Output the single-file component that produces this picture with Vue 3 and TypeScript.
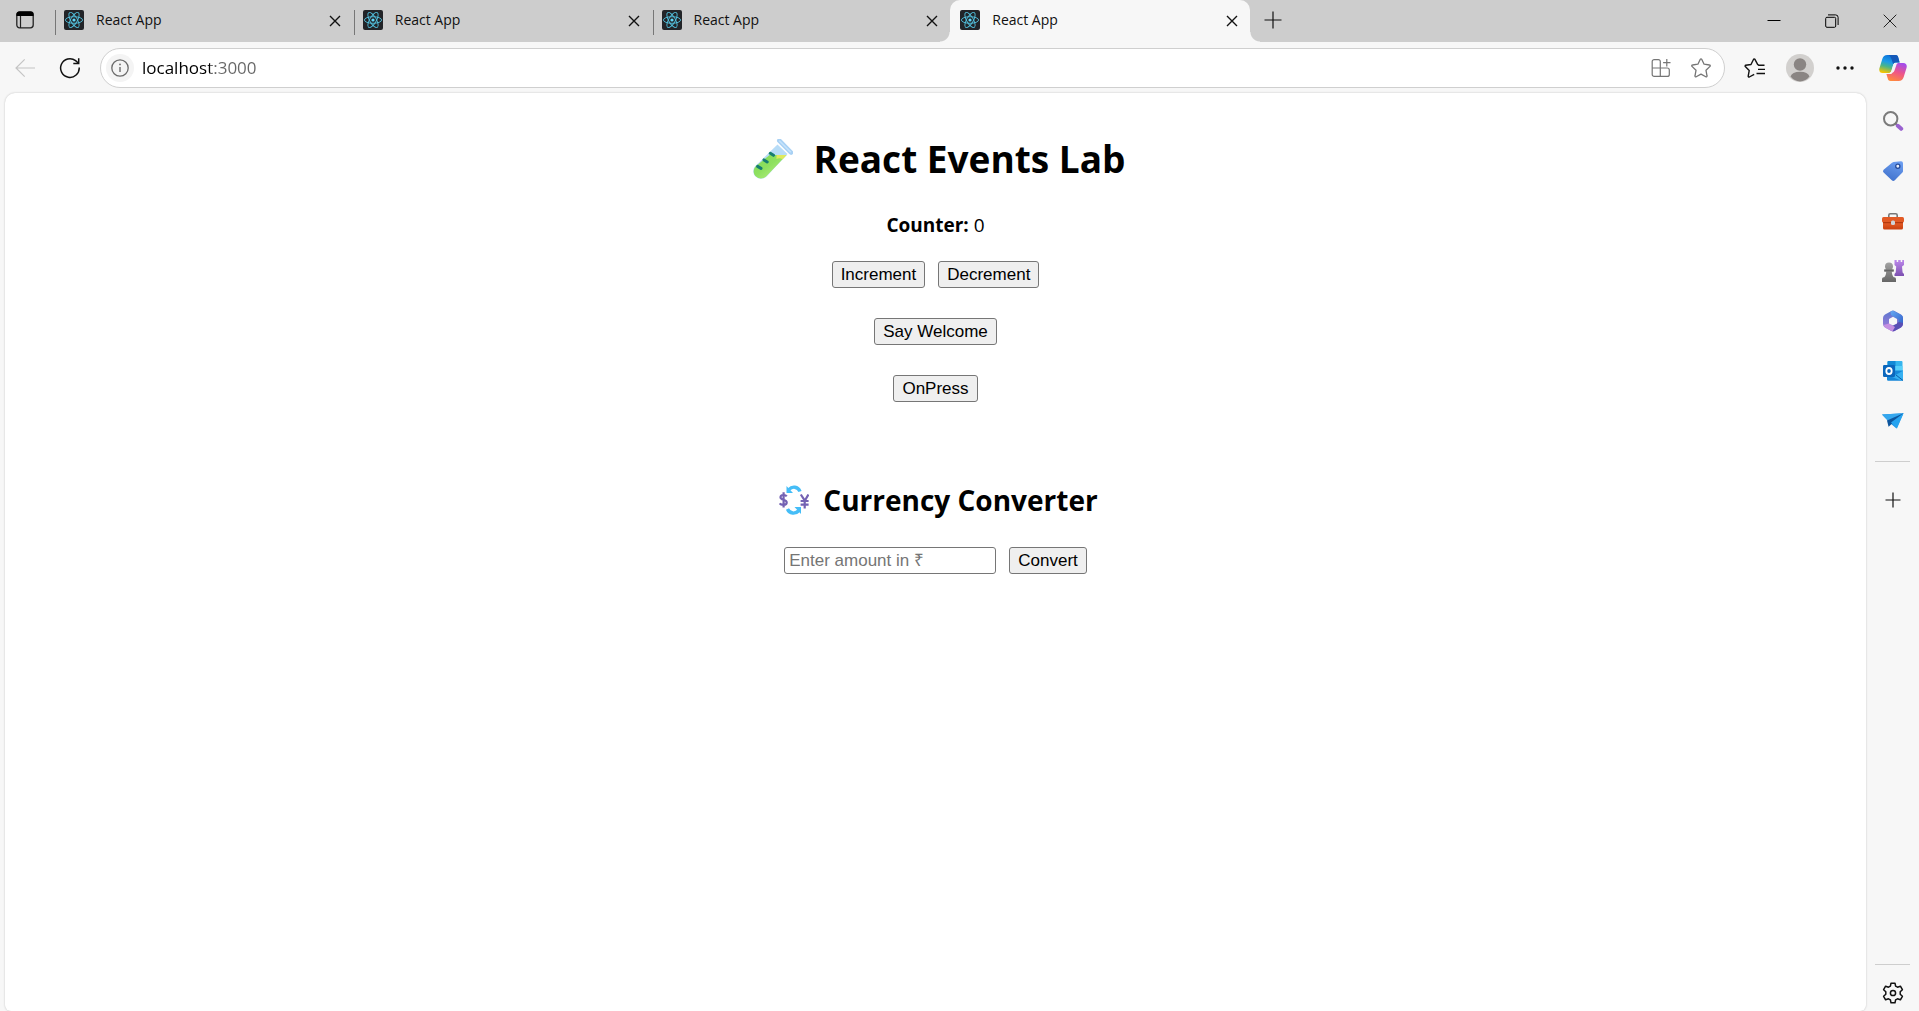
<script setup lang="ts">
import { ref } from 'vue'

interface Tab {
  id: number
  title: string
}

const tabs = ref<Tab[]>([
  { id: 1, title: 'React App' },
  { id: 2, title: 'React App' },
  { id: 3, title: 'React App' },
  { id: 4, title: 'React App' },
])
const activeTab = ref(4)
const address = ref('localhost:3000')

const counter = ref(0)
const amount = ref('')
const message = ref('')

const increment = () => { counter.value += 1 }
const decrement = () => { counter.value -= 1 }
const say = (text: string) => { message.value = text }
const convert = () => {
  const rupees = Number(amount.value)
  message.value = rupees ? `€${(rupees / 90).toFixed(2)}` : ''
}
</script>

<template>
  <div class="browser">
    <header class="tab-strip">
      <button class="icon-btn tab-actions" type="button" aria-label="Tab actions menu">
        <svg width="20" height="20" viewBox="0 0 20 20" fill="none">
          <rect x="1.8" y="1.8" width="16.4" height="16" rx="2.8" stroke="#222" stroke-width="1.3" />
          <path d="M1.5 6V4.5a3 3 0 0 1 3-3h11a3 3 0 0 1 3 3V6z" fill="#000" />
          <path d="M5.5 6v12" stroke="#222" stroke-width="1.2" />
        </svg>
      </button>
      <nav class="tabs" aria-label="Tabs">
        <div v-for="tab in tabs" :key="tab.id" class="tab" :class="{ active: tab.id === activeTab }">
          <button class="tab-main" type="button" @click="activeTab = tab.id">
            <svg width="20" height="20" viewBox="0 0 20 20" fill="none">
              <rect width="20" height="20" rx="2" fill="#222428" />
              <g stroke="#53c1de" stroke-width="0.9">
                <ellipse cx="10" cy="10" rx="8.6" ry="3.3" />
                <ellipse cx="10" cy="10" rx="8.6" ry="3.3" transform="rotate(60 10 10)" />
                <ellipse cx="10" cy="10" rx="8.6" ry="3.3" transform="rotate(120 10 10)" />
              </g>
              <circle cx="10" cy="10" r="1.6" fill="#61dafb" />
            </svg>
            <span>{{ tab.title }}</span>
          </button>
          <button class="icon-btn tab-close" type="button" aria-label="Close tab">
            <svg width="12" height="12" viewBox="0 0 12 12"><path d="M1 1l10 10M11 1L1 11" stroke="#111" stroke-width="1.4" /></svg>
          </button>
        </div>
      </nav>
      <button class="icon-btn new-tab" type="button" aria-label="New tab">
        <svg width="18" height="18" viewBox="0 0 18 18"><path d="M9 0.5v17M0.5 9h17" stroke="#111" stroke-width="1.2" /></svg>
      </button>
      <div class="window-controls">
        <button class="icon-btn" type="button" aria-label="Minimize">
          <svg width="14" height="14" viewBox="0 0 14 14"><path d="M0.5 6.5h13" stroke="#000" /></svg>
        </button>
        <button class="icon-btn" type="button" aria-label="Restore">
          <svg width="14" height="14" viewBox="0 0 14 14" fill="none" stroke="#000">
            <rect x="0.7" y="3.3" width="10" height="10" rx="1.2" />
            <path d="M3 0.9h7.6a2.5 2.5 0 0 1 2.5 2.5V11" />
          </svg>
        </button>
        <button class="icon-btn" type="button" aria-label="Close">
          <svg width="14" height="14" viewBox="0 0 14 14"><path d="M0.7 0.7l12.6 12.6M13.3 0.7L0.7 13.3" stroke="#222" /></svg>
        </button>
      </div>
    </header>

    <div class="toolbar">
      <button class="icon-btn tool" type="button" aria-label="Back" disabled>
        <svg width="20" height="20" viewBox="0 0 20 20" fill="none" stroke="#c4c4c4" stroke-width="1.2">
          <path d="M20 10H1M9.7 1.3L1 10l8.7 8.7" />
        </svg>
      </button>
      <button class="icon-btn tool" type="button" aria-label="Refresh">
        <svg width="22" height="22" viewBox="0 0 22 22" fill="none" stroke="#111" stroke-width="1.5">
          <path d="M20.2 10.5a9.3 9.3 0 1 1-3.6-6.8l2.6 2.3" /><path d="M19.7 1.2v5.4h-5.4" />
        </svg>
      </button>
      <div class="address-bar">
        <button class="icon-btn site-info" type="button" aria-label="View site information">
          <svg width="18" height="18" viewBox="0 0 18 18" fill="none">
            <circle cx="9" cy="9" r="8.2" stroke="#6b6b6b" stroke-width="1.3" />
            <path d="M9 8v5" stroke="#6b6b6b" stroke-width="1.4" /><circle cx="9" cy="5.4" r="0.9" fill="#6b6b6b" />
          </svg>
        </button>
        <input v-model="address" class="address" type="text" aria-label="Address and search bar" spellcheck="false" />
        <button class="icon-btn address-action" type="button" aria-label="App available">
          <svg width="20" height="20" viewBox="0 0 20 20" fill="none" stroke="#757575" stroke-width="1.2">
            <path d="M9.3 18.4H3.2A2 2 0 0 1 1.2 16.4V3.6A2 2 0 0 1 3.2 1.6h4.2a1.9 1.9 0 0 1 1.9 1.9v14.9M1.2 10h15.1a2 2 0 0 1 2 2v4.4a2 2 0 0 1-2 2h-7" />
            <path d="M15.8 1v7.4M12.1 4.7h7.4" />
          </svg>
        </button>
        <button class="icon-btn address-action" type="button" aria-label="Add this page to favorites">
          <svg width="22" height="22" viewBox="0 0 22 22" fill="none" stroke="#757575" stroke-width="1.3" stroke-linejoin="round">
            <path d="M10.3 2.2a.8.8 0 0 1 1.4 0l2.4 5 5.4.8a.8.8 0 0 1 .5 1.4l-4 3.9 1 5.5a.8.8 0 0 1-1.2.9L11 17.1l-4.8 2.6a.8.8 0 0 1-1.2-.9l1-5.5-4-3.9A.8.8 0 0 1 2.5 8l5.4-.8z" />
          </svg>
        </button>
      </div>
      <button class="icon-btn tool" type="button" aria-label="Favorites">
        <svg width="22" height="22" viewBox="0 0 22 22" fill="none" stroke="#111" stroke-width="1.4" stroke-linejoin="round">
          <path d="M20.5 8.3h-5.6l-1.3-.9-2.8-5.2a.7.7 0 0 0-1.2 0L7 7.5l-5.3.8a.8.8 0 0 0-.4 1.3l3.9 4-1 5.5a.8.8 0 0 0 1.1.9l4.9-2.7" />
          <path d="M14 12.4h7M12.5 16.5h8.5" />
        </svg>
      </button>
      <button class="icon-btn tool" type="button" aria-label="Profile">
        <svg width="28" height="28" viewBox="0 0 28 28">
          <circle cx="14" cy="14" r="14" fill="#d2d0ce" /><circle cx="14" cy="10.5" r="6.2" fill="#8a8583" />
          <path d="M4.5 22.5Q6 17.8 14 17.8t9.5 4.7A13 13 0 0 1 14 27.4a13 13 0 0 1-9.5-4.9z" fill="#8a8583" />
        </svg>
      </button>
      <button class="icon-btn tool" type="button" aria-label="Settings and more">
        <svg width="18" height="4" viewBox="0 0 18 4" fill="#111"><circle cx="2" cy="2" r="1.7" /><circle cx="9" cy="2" r="1.7" /><circle cx="16" cy="2" r="1.7" /></svg>
      </button>
      <button class="icon-btn copilot" type="button" aria-label="Copilot">
        <svg width="28" height="26" viewBox="0 0 28 26">
          <defs>
            <linearGradient id="cpBlue" x1="0.6" y1="0" x2="0.3" y2="1"><stop offset="0" stop-color="#0b6fd8" /><stop offset="0.4" stop-color="#1c9ce8" /><stop offset="0.65" stop-color="#48b58a" /><stop offset="1" stop-color="#f5c400" /></linearGradient>
            <linearGradient id="cpPink" x1="0.7" y1="0" x2="0.3" y2="1"><stop offset="0" stop-color="#a44cec" /><stop offset="0.5" stop-color="#ee5589" /><stop offset="1" stop-color="#ff8a3c" /></linearGradient>
          </defs>
          <path d="M18 8h6.3c2.9 0 4 2.3 3.2 5l-2.8 9c-.8 2.6-2.4 4-5 4h-8c-2 0-2.7-1.3-3.1-3l-1.2-4H11c1.7 0 2.3-.8 2.8-2.3l1.7-5.8C16 9 16.6 8 18 8z" fill="url(#cpPink)" />
          <path d="M10 18H3.7C.8 18-.3 15.7.5 13l2.8-9c.8-2.6 2.4-4 5-4h8c2 0 2.700 1.300 3.100 3l1.200 4.500H17c-1.700 0-2.300.8-2.800 2.300l-1.700 5.700C12 17 11.400 18 10 18z" fill="url(#cpBlue)" />
          <path d="M9.500 0h7c1.800 0 2.500 1.300 2.900 3l1.200 4.500H17c-1.500 0-2.200.5-2.700 1.800C13 6 12.300 1.500 9.500 0z" fill="#1559b8" />
          <path d="M18 8h-1c-1.700 0-2.400.8-2.800 2.300l-1.700 5.400c-.5 1.600-1.200 2.300-2.500 2.300h1.200c1.500 0 3.500-.2 4.200-2.200l1.900-5.500C17.600 9 18 8.500 19 8z" fill="#f3f3f6" />
        </svg>
      </button>
    </div>

    <div class="workspace">
      <main class="page">
        <h1>
          <svg width="40" height="40" viewBox="0 0 40 40" aria-hidden="true">
            <defs>
              <linearGradient id="liquid" x1="0" y1="0" x2="1" y2="1"><stop offset="0" stop-color="#82d957" /><stop offset="0.45" stop-color="#8de05f" /><stop offset="1" stop-color="#c4f58a" /></linearGradient>
            </defs>
            <path d="M24.500 5.500L34.500 15 14 37C11 40.200 6 40.800 2.800 37.800-.6 34.600-.4 30 2.600 26.800z" fill="#b7dcf7" />
            <path d="M16.600 16H33.600L13.600 37C10.800 40 6 40.500 3 37.600 0 34.700 0 30.300 2.800 27.200z" fill="url(#liquid)" />
            <path d="M23.500 16h10l-4 4.200q-3-1.800-6-.2z" fill="#e0e95d" />
            <path d="M26.300 1.700L38 13.500" stroke="#a9d1f4" stroke-width="4.600" stroke-linecap="round" />
            <path d="M26.800 2.200l10.500 10.600" stroke="#c5e3fb" stroke-width="1.600" stroke-linecap="round" />
            <path d="M17.300 14.300l3.200 2M11 20.900l3.200 2M4.600 27.400l3.400 2" stroke="#167d70" stroke-width="3" stroke-linecap="round" />
          </svg>
          <span>React Events Lab</span>
        </h1>
        <p class="counter"><strong>Counter:</strong> {{ counter }}</p>
        <div class="row">
          <button class="native" type="button" @click="increment">Increment</button>
          <button class="native" type="button" @click="decrement">Decrement</button>
        </div>
        <div class="row">
          <button class="native" type="button" @click="say('Welcome')">Say Welcome</button>
        </div>
        <div class="row">
          <button class="native" type="button" @click="say('I was clicked')">OnPress</button>
        </div>
        <h2>
          <svg width="30" height="30" viewBox="0 0 30 30" fill="none" aria-hidden="true">
            <g stroke="#45bdf7" stroke-width="3.400"><path d="M21 6.500C19 1.200 13 1 10 4.500" /><path d="M8.500 24C10.500 29 16.500 29.300 20 25.500" /></g>
            <path d="M7.500 1v7h6.500zM22 29v-7h-6.500z" fill="#45bdf7" />
            <g stroke="#7462b3" stroke-width="2.200">
              <path d="M7.700 11.300C6.500 9.500 1.500 9.300 1.500 12.300 1.500 15.600 7.700 14 7.700 17.500 7.700 20.600 2 20.500.8 18.400M4.600 7.200v15.200" />
              <path d="M21.800 9.500l4 6.200 3.600-6.200M25.700 15v8.500M21.600 16h8M21.600 19.600h8" />
            </g>
          </svg>
          <span>Currency Converter</span>
        </h2>
        <form class="row" @submit.prevent="convert">
          <input v-model="amount" class="amount" type="text" placeholder="Enter amount in ₹" aria-label="Amount in rupees" />
          <button class="native" type="submit">Convert</button>
        </form>
        <p v-if="message" class="counter">{{ message }}</p>
      </main>

      <aside class="sidebar">
        <button class="icon-btn side" type="button" aria-label="Search">
          <svg width="22" height="22" viewBox="0 0 22 22" fill="none">
            <circle cx="8.700" cy="8.700" r="6.700" stroke="#7b7b7b" stroke-width="2" />
            <path d="M13 13l2.500 2.500" stroke="#777" stroke-width="2" /><path d="M15.800 15.800l3.400 3" stroke="#9a62d0" stroke-width="4" stroke-linecap="round" />
          </svg>
        </button>
        <button class="icon-btn side" type="button" aria-label="Shopping">
          <svg width="22" height="22" viewBox="0 0 22 22">
            <defs><linearGradient id="tagFill" x1="0.7" y1="0" x2="0.3" y2="1"><stop offset="0" stop-color="#6b9df0" /><stop offset="1" stop-color="#4172cc" /></linearGradient></defs>
            <path d="M11.500 2L19 1.200A2 2 0 0 1 21 3.200v8a2 2 0 0 1-.6 1.400l-7.600 7.600a2.200 2.200 0 0 1-3 0L1.600 12.500a2 2 0 0 1 0-2.800L10 2.700z" fill="url(#tagFill)" />
            <circle cx="15.800" cy="6.200" r="2.100" fill="#e9effc" stroke="#254a99" stroke-width="1.300" />
          </svg>
        </button>
        <button class="icon-btn side" type="button" aria-label="Tools">
          <svg width="22" height="20" viewBox="0 0 22 20" fill="none">
            <defs><linearGradient id="boxFill" x1="0" y1="0" x2="0" y2="1"><stop offset="0" stop-color="#ef6730" /><stop offset="1" stop-color="#c9400f" /></linearGradient></defs>
            <path d="M6.800 7V4.300a1.500 1.500 0 0 1 1.500-1.500h5.400a1.500 1.500 0 0 1 1.500 1.500V7" stroke="#777" stroke-width="1.600" />
            <rect x="1" y="9" width="20" height="9.500" rx="1.500" fill="url(#boxFill)" /><rect y="6" width="22" height="5.500" rx="1.500" fill="#e25a25" />
            <path d="M1 11.700h20" stroke="#a9330b" /><rect x="9" y="9.500" width="4" height="4.500" rx="1.500" fill="#cfd3d8" />
          </svg>
        </button>
        <button class="icon-btn side" type="button" aria-label="Games">
          <svg width="22" height="24" viewBox="0 0 22 24">
            <defs>
              <linearGradient id="pawn" x1="0" y1="0" x2="0" y2="1"><stop offset="0" stop-color="#a3a3a3" /><stop offset="1" stop-color="#666" /></linearGradient>
              <linearGradient id="rook" x1="0" y1="0" x2="0" y2="1"><stop offset="0" stop-color="#bd88ec" /><stop offset="1" stop-color="#7c50b0" /></linearGradient>
            </defs>
            <path d="M12.500 1h2.200v2h1.500V1h2.500v2h1.500V1H22v5l-2 1.500.6 6L22 15v2h-9.500v-2l1.200-1.500.5-6-1.700-1.500z" fill="url(#rook)" />
            <path d="M7 3.500a4 4 0 0 1 4 4 4 4 0 0 1-1 2.700h1.700v2.600H9.800c.2 2.500.8 4.200 2 5.400h.6A1.800 1.800 0 0 1 14 20v3H0v-3a1.800 1.800 0 0 1 1.700-1.800h.5c1.300-1.200 1.900-2.900 2-5.400H2.300v-2.600H4A4 4 0 0 1 3 7.500a4 4 0 0 1 4-4z" fill="url(#pawn)" />
            <path d="M2.300 11.500h9.400" stroke="#666" stroke-width="1.600" />
          </svg>
        </button>
        <button class="icon-btn side" type="button" aria-label="Microsoft 365">
          <svg width="20" height="22" viewBox="0 0 20 22">
            <defs>
              <linearGradient id="mTop" x1="0" y1="0" x2="1" y2="1"><stop offset="0" stop-color="#66a9f2" /><stop offset="1" stop-color="#2f5fc9" /></linearGradient>
              <linearGradient id="mLeft" x1="0" y1="0" x2="0" y2="1"><stop offset="0" stop-color="#5b78d0" /><stop offset="1" stop-color="#a97ad9" /></linearGradient>
            </defs>
            <path d="M8 1.200a4 4 0 0 1 4 0l6 3.400a4 4 0 0 1 2 3.400v6a4 4 0 0 1-2 3.400l-6 3.400a4 4 0 0 1-4 0l-6-3.400a4 4 0 0 1-2-3.400V8a4 4 0 0 1 2-3.400z" fill="url(#mLeft)" />
            <path d="M7.500 1.500L10 .7l8.400 4.200A4 4 0 0 1 20 8v6l-4.500 2.500V9.500L8 5z" fill="url(#mTop)" />
            <path d="M20 13.500c0 1.500-.8 3-2 3.900l-6 3.400c-1.500.8-3 .7-4-.2l-2-2.600 4-3 6-3 4 1z" fill="#594fb4" />
            <path d="M.5 15l5.500-1.500 6 3.500-2.500 4.200-1.500-.4-6-3.400z" fill="#c58fe2" />
            <path d="M10 6.800l4 2.200v4.400L10 15.600l-4-2.200V9z" fill="#f7f7f7" />
          </svg>
        </button>
        <button class="icon-btn side" type="button" aria-label="Outlook">
          <svg width="20" height="22" viewBox="0 0 20 22" fill="none">
            <rect x="4.500" y="1" width="15" height="14" rx="1" fill="#35b5ee" /><path d="M4.500 2a1 1 0 0 1 1-1h7v5h-8z" fill="#1389d5" /><path d="M12.500 6h7v5h-7z" fill="#58d0fa" />
            <path d="M4 10.500h16V19.500a1.200 1.200 0 0 1-1.200 1.200H5.200A1.200 1.200 0 0 1 4 19.500z" fill="#1687d9" /><path d="M20 10.800L9 17l9.500 3.700c.8 0 1.500-.6 1.500-1.200z" fill="#36b0f1" /><path d="M13 15l7 5.500" stroke="#0c5ca8" />
            <rect y="5" width="12" height="12" rx="1.200" fill="#0b67bd" /><ellipse cx="6" cy="11" rx="2.700" ry="3" stroke="#fff" stroke-width="1.800" />
          </svg>
        </button>
        <button class="icon-btn side" type="button" aria-label="Drop">
          <svg width="22" height="20" viewBox="0 0 22 20">
            <path d="M0 3.600L21.500 2.300 14.500 17.500 9.800 13.500z" fill="#1b8fe0" /><path d="M0 3.600L21.500 2.300 7 11z" fill="#35a7ee" />
            <path d="M21.500 2.300L5 9.500l1.600 6.200 3.400-3z" fill="#0c559e" /><path d="M21.500 2.300L9 11.500l6 6z" fill="#26a3ef" />
          </svg>
        </button>
        <hr class="add-line" />
        <button class="icon-btn side" type="button" aria-label="Customize">
          <svg width="16" height="16" viewBox="0 0 16 16"><path d="M8 0.500v15M0.500 8h15" stroke="#111" stroke-width="1.200" /></svg>
        </button>
        <hr class="settings-line" />
        <button class="icon-btn settings" type="button" aria-label="Settings">
          <svg width="22" height="22" viewBox="0 0 22 22" fill="none" stroke="#111" stroke-width="1.500" stroke-linejoin="round">
            <path d="M9 1.200h4l.6 2.900 1.900 1.100 2.900-1 2 3.500-2.200 2.100v2.400l2.200 2.100-2 3.500-2.900-1-1.900 1.100-.6 2.900H9l-.6-2.900-1.900-1.100-2.900 1-2-3.500 2.200-2.100V9.800L1.600 7.700l2-3.500 2.900 1 1.900-1.100z" />
            <circle cx="11" cy="11" r="2.600" />
          </svg>
        </button>
      </aside>
    </div>
  </div>
</template>

<style>
body {
  margin: 0;
  background: #f7f7f7;
}
</style>

<style scoped>
.browser {
  display: flex;
  flex-direction: column;
  min-height: 100vh;
  background: #f7f7f7;
  color: #000;
  font-family: "Segoe UI", "Open Sans", sans-serif;
}

button,
input {
  box-sizing: border-box;
  margin: 0;
}

.icon-btn {
  display: flex;
  flex: none;
  align-items: center;
  justify-content: center;
  padding: 0;
  border: 0;
  background: none;
}

svg {
  display: block;
  flex: none;
}

.tab-strip {
  display: flex;
  height: 42px;
  background: #cdcdcd;
}

.tab-actions {
  width: 50px;
  height: 40px;
  margin-right: 4px;
}

.tabs {
  display: flex;
  min-width: 0;
}

.tab {
  position: relative;
  display: flex;
  align-items: center;
  flex: 0 1 299px;
  width: 299px;
  box-sizing: border-box;
  padding: 0 8px 2px 0;
}

.tab:not(.active)::before {
  content: "";
  width: 1px;
  height: 25px;
  margin: 4px 0 0 1px;
  background: #777;
}

.tab.active {
  flex-basis: 300px;
  border-radius: 10px 10px 0 0;
  background: #f7f7f7;
  padding-left: 2px;
}

.tab.active::before,
.tab.active::after {
  content: "";
  position: absolute;
  bottom: 0;
  width: 10px;
  height: 10px;
}

.tab.active::before {
  right: 100%;
  background: radial-gradient(circle at 0 0, transparent 9px, #f7f7f7 10px);
}

.tab.active::after {
  left: 100%;
  background: radial-gradient(circle at 100% 0, transparent 9px, #f7f7f7 10px);
}

.tab-main {
  display: flex;
  flex: 1;
  align-items: center;
  gap: 12px;
  min-width: 0;
  height: 40px;
  padding: 0 0 0 8px;
  border: 0;
  background: none;
  color: #111;
  font: 14px/20px "Segoe UI", "Open Sans", sans-serif;
}

.tab-close {
  width: 20px;
  height: 20px;
  margin-top: 2px;
}

.new-tab {
  width: 45px;
  height: 40px;
}

.window-controls {
  display: flex;
  margin-left: auto;
}

.window-controls .icon-btn {
  width: 58px;
  height: 42px;
}

.toolbar {
  display: flex;
  align-items: center;
  height: 51px;
  padding-left: 2px;
}

.tool {
  width: 45px;
  height: 40px;
}

.address-bar {
  display: flex;
  flex: 1;
  align-items: center;
  height: 40px;
  box-sizing: border-box;
  margin: 0 7px 0 8px;
  padding: 0 3px 0 5px;
  border: 1px solid #cfcfcf;
  border-radius: 20px;
  background: #fff;
}

.site-info {
  width: 28px;
  height: 28px;
  border-radius: 14px;
  background: #f4f4f4;
}

.address {
  flex: 1;
  min-width: 0;
  padding: 0 0 0 8px;
  border: 0;
  outline: 0;
  background: linear-gradient(90deg, #000 76px, #666 76px) text;
  color: transparent;
  font: 17px/24px "Segoe UI", "Open Sans", sans-serif;
}

.address-action {
  width: 40px;
  height: 36px;
}

.copilot {
  width: 52px;
  height: 40px;
}

.workspace {
  display: flex;
  flex: 1;
}

.page {
  display: flex;
  flex: 1;
  flex-direction: column;
  align-items: center;
  margin-left: 5px;
  border-radius: 10px 10px 6px 6px;
  background: #fff;
  box-shadow: 0 0 2px #bbb;
}

h1,
h2 {
  display: flex;
  align-items: center;
  margin: 0;
}

h1 {
  gap: 20px;
  padding: 39px 0 0 8px;
  font-size: 37px;
  line-height: 54px;
}

.counter {
  margin: 25px 0 22px;
  font-size: 19px;
  line-height: 28px;
}

.row {
  display: flex;
  gap: 13px;
  margin-bottom: 30px;
}

.native {
  height: 27px;
  padding: 0 8px;
  border: 1px solid #767676;
  border-radius: 3px;
  background: #efefef;
  color: #000;
  font: 17px/20px "Liberation Sans", Arial, sans-serif;
}

h2 {
  gap: 14px;
  padding: 48px 0 27px 6px;
  font-size: 28px;
  line-height: 40px;
}

.amount {
  width: 212px;
  height: 27px;
  padding: 1px 4px;
  border: 1px solid #767676;
  border-radius: 3px;
  background: #fff;
  font: 17px/20px "Liberation Sans", Arial, sans-serif;
}

.amount::placeholder {
  color: #757575;
}

.sidebar {
  display: flex;
  flex-direction: column;
  align-items: center;
  width: 53px;
  padding-top: 3px;
  box-sizing: border-box;
}

.side {
  width: 50px;
  height: 50px;
}

.settings {
  width: 50px;
  height: 36px;
}

hr {
  width: 35px;
  height: 1px;
  margin: 0;
  border: 0;
  background: #cecece;
}

.add-line {
  margin: 15px 0 13px;
}

.settings-line {
  margin: auto 0 10px;
}
</style>
